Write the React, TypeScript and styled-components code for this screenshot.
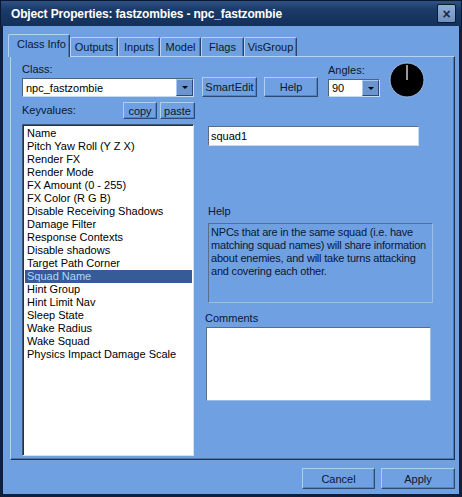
import React from 'react';
import styled, { createGlobalStyle } from 'styled-components';

const keyvalues = [
  'Name',
  'Pitch Yaw Roll (Y Z X)',
  'Render FX',
  'Render Mode',
  'FX Amount (0 - 255)',
  'FX Color (R G B)',
  'Disable Receiving Shadows',
  'Damage Filter',
  'Response Contexts',
  'Disable shadows',
  'Target Path Corner',
  'Squad Name',
  'Hint Group',
  'Hint Limit Nav',
  'Sleep State',
  'Wake Radius',
  'Wake Squad',
  'Physics Impact Damage Scale',
];

const tabs = [
  { label: 'Class Info', width: 62 },
  { label: 'Outputs', width: 48 },
  { label: 'Inputs', width: 42 },
  { label: 'Model', width: 41 },
  { label: 'Flags', width: 43 },
  { label: 'VisGroup', width: 53 },
];

const helpText =
  'NPCs that are in the same squad (i.e. have\nmatching squad names) will share information\nabout enemies, and will take turns attacking\nand covering each other.';

const GlobalStyle = createGlobalStyle`
  html, body {
    margin: 0;
    padding: 0;
    background: #6fa0e1;
  }
  * {
    box-sizing: border-box;
  }
`;

const Window = styled.div`
  width: 462px;
  height: 497px;
  display: flex;
  flex-direction: column;
  background: #6fa0e1;
  font-family: "Liberation Sans", Arial, sans-serif;
  font-size: 11px;
  color: #0c1830;
`;

const TitleBar = styled.div`
  height: 26px;
  flex-shrink: 0;
  display: flex;
  align-items: center;
  justify-content: space-between;
  padding: 0 5px 0 10px;
  background: linear-gradient(to bottom, #2f5286 0%, #1a3a68 35%, #12305a 100%);
  border: 1px solid #0a1830;
  border-bottom: none;
`;

const Title = styled.span`
  color: #ffffff;
  font-weight: bold;
  font-size: 12px;
  letter-spacing: -0.15px;
`;

const CloseButton = styled.div`
  width: 19px;
  height: 19px;
  display: flex;
  align-items: center;
  justify-content: center;
  background: linear-gradient(to bottom, #8eaed6, #6f92c0);
  border: 1px solid #0b1a33;
  border-radius: 2px;
  color: #1a2a46;
  font-weight: bold;
  font-size: 14px;
  line-height: 1;
`;

const Body = styled.div`
  flex: 1;
  display: flex;
  flex-direction: column;
  border: 3px solid #10203c;
  border-top: none;
  padding-top: 8px;
`;

const TabStrip = styled.div`
  display: flex;
  align-items: flex-end;
  height: 22px;
  margin-left: 5px;
  position: relative;
  z-index: 1;
`;

const Tab = styled.div<{ $active?: boolean; $width: number }>`
  width: ${(p) => p.$width}px;
  height: ${(p) => (p.$active ? 23 : 19)}px;
  margin-bottom: ${(p) => (p.$active ? -1 : 0)}px;
  padding: ${(p) => (p.$active ? '3px 0 0 8px' : '0')};
  display: flex;
  align-items: ${(p) => (p.$active ? 'flex-start' : 'center')};
  justify-content: ${(p) => (p.$active ? 'flex-start' : 'center')};
  background: #6fa0e1;
  border-top: 1px solid #b8d2f4;
  border-left: 1px solid #b8d2f4;
  border-right: 1px solid #27426c;
  border-radius: 2px 2px 0 0;
  box-shadow: inset -1px 0 #4f78ae;
  color: #0c1830;
`;

const TabPanel = styled.div`
  margin-left: 7px;
  width: 445px;
  height: 404px;
  border-top: 1px solid #b8d2f4;
  border-left: 1px solid #b8d2f4;
  border-right: 1px solid #1e3458;
  border-bottom: 1px solid #1e3458;
  box-shadow: inset -1px -1px #4f78ae;
  padding: 6px 0 0 11px;
`;

const TopRow = styled.div`
  display: flex;
  align-items: flex-end;
`;

const FieldGroup = styled.div<{ $ml?: number }>`
  display: flex;
  flex-direction: column;
  margin-left: ${(p) => p.$ml ?? 0}px;
`;

const Label = styled.div<{ $ml?: number; $mt?: number }>`
  line-height: 13px;
  height: 13px;
  margin-bottom: 2px;
  margin-left: ${(p) => p.$ml ?? 0}px;
  margin-top: ${(p) => p.$mt ?? 0}px;
  color: #0c1830;
`;

const Combo = styled.div<{ $width: number; $height: number }>`
  width: ${(p) => p.$width}px;
  height: ${(p) => p.$height}px;
  display: flex;
  background: #ffffff;
  border: 1px solid;
  border-color: #4f6381 #c7dbf4 #c7dbf4 #4f6381;
`;

const ComboText = styled.div`
  flex: 1;
  padding-left: 3px;
  display: flex;
  align-items: center;
  color: #000000;
`;

const ComboArrow = styled.div`
  width: 17px;
  display: flex;
  align-items: center;
  justify-content: center;
  background: #6a95cf;
  border: 1px solid;
  border-color: #a9c7ef #2c4a78 #2c4a78 #a9c7ef;

  &::after {
    content: '';
    border-left: 3px solid transparent;
    border-right: 3px solid transparent;
    border-top: 3px solid #000000;
  }
`;

const Button = styled.button<{ $width: number; $height?: number; $ml?: number }>`
  width: ${(p) => p.$width}px;
  height: ${(p) => p.$height ?? 20}px;
  margin-left: ${(p) => p.$ml ?? 0}px;
  padding: 0;
  background: #6fa0e1;
  border: 1px solid;
  border-color: #b0cdf2 #2d4a76 #2d4a76 #b0cdf2;
  box-shadow: inset -1px -1px #5882ba;
  font-family: "Liberation Sans", Arial, sans-serif;
  font-size: 11px;
  color: #0c1830;
`;

const Dial = styled.svg`
  margin: -1px 0 -1px 9px;
  flex-shrink: 0;
`;

const Columns = styled.div`
  display: grid;
  grid-template-columns: 172px 1fr;
  column-gap: 14px;
  margin-top: 5px;
`;

const LeftColumn = styled.div`
  display: flex;
  flex-direction: column;
`;

const KeyHeader = styled.div`
  height: 17px;
  display: flex;
  align-items: flex-end;
  justify-content: space-between;
`;

const ButtonPair = styled.div`
  display: flex;
  gap: 3px;
  margin-right: -1px;
`;

const ListBox = styled.div`
  margin-top: 5px;
  height: 332px;
  background: #ffffff;
  border: 1px solid;
  border-color: #46566e #d4e2f4 #d4e2f4 #46566e;
  box-shadow: inset 1px 1px #28323f;
  padding: 2px 1px 0 2px;
`;

const ListItem = styled.div<{ $selected?: boolean }>`
  height: 13px;
  line-height: 13px;
  padding-left: 2px;
  white-space: nowrap;
  color: ${(p) => (p.$selected ? '#b7d4f8' : '#000000')};
  background: ${(p) => (p.$selected ? '#355c96' : 'transparent')};
`;

const RightColumn = styled.div`
  display: flex;
  flex-direction: column;
`;

const ValueInput = styled.div`
  margin-top: 24px;
  width: 211px;
  height: 20px;
  padding-left: 2px;
  display: flex;
  align-items: center;
  background: #ffffff;
  border: 1px solid;
  border-color: #5a6c86 #c7dbf4 #c7dbf4 #5a6c86;
  color: #000000;
`;

const HelpBox = styled.div`
  margin-top: 3px;
  width: 225px;
  height: 80px;
  padding: 2px 0 0 2px;
  border: 1px solid;
  border-color: #5b6d88 #9cbde6 #9cbde6 #5b6d88;
  white-space: pre;
  overflow: hidden;
  letter-spacing: -0.2px;
  line-height: 13px;
  color: #0a1836;
`;

const CommentsBox = styled.div`
  margin-left: -2px;
  width: 225px;
  height: 74px;
  background: #ffffff;
  border: 1px solid;
  border-color: #5e6e82 #9cbde6 #9cbde6 #5e6e82;
`;

const Footer = styled.div`
  display: flex;
  justify-content: flex-end;
  gap: 6px;
  padding: 8px 4px 0 0;
`;

const AngleDial = () => (
  <Dial width="36" height="36" viewBox="0 0 36 36">
    <circle cx="18" cy="18" r="17" fill="#000000" stroke="#9dbde6" strokeWidth="1" />
    <line x1="18" y1="18" x2="18" y2="3" stroke="#ffffff" strokeWidth="1.2" />
  </Dial>
);

export default function App() {
  return (
    <>
      <GlobalStyle />
      <Window>
        <TitleBar>
          <Title>Object Properties: fastzombies - npc_fastzombie</Title>
          <CloseButton>×</CloseButton>
        </TitleBar>
        <Body>
          <TabStrip>
            {tabs.map((t, i) => (
              <Tab key={t.label} $width={t.width} $active={i === 0}>
                {t.label}
              </Tab>
            ))}
          </TabStrip>
          <TabPanel>
            <TopRow>
              <FieldGroup>
                <Label>Class:</Label>
                <Combo $width={172} $height={19}>
                  <ComboText>npc_fastzombie</ComboText>
                  <ComboArrow />
                </Combo>
              </FieldGroup>
              <Button $width={55} $ml={8}>SmartEdit</Button>
              <Button $width={54} $ml={7}>Help</Button>
              <FieldGroup $ml={10}>
                <Label>Angles:</Label>
                <Combo $width={52} $height={18}>
                  <ComboText>90</ComboText>
                  <ComboArrow />
                </Combo>
              </FieldGroup>
              <AngleDial />
            </TopRow>
            <Columns>
              <LeftColumn>
                <KeyHeader>
                  <Label>Keyvalues:</Label>
                  <ButtonPair>
                    <Button $width={34} $height={17}>copy</Button>
                    <Button $width={35} $height={17}>paste</Button>
                  </ButtonPair>
                </KeyHeader>
                <ListBox>
                  {keyvalues.map((k) => (
                    <ListItem key={k} $selected={k === 'Squad Name'}>
                      {k}
                    </ListItem>
                  ))}
                </ListBox>
              </LeftColumn>
              <RightColumn>
                <ValueInput>squad1</ValueInput>
                <Label $mt={59}>Help</Label>
                <HelpBox>{helpText}</HelpBox>
                <Label $mt={9} $ml={-3}>Comments</Label>
                <CommentsBox />
              </RightColumn>
            </Columns>
          </TabPanel>
          <Footer>
            <Button $width={73} $height={21}>Cancel</Button>
            <Button $width={74} $height={21}>Apply</Button>
          </Footer>
        </Body>
      </Window>
    </>
  );
}
